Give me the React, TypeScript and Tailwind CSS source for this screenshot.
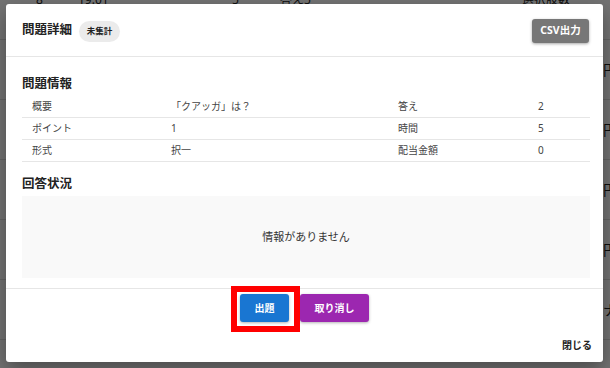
const font = { fontFamily: '"Noto Sans", "Noto Sans CJK JP", sans-serif' };

const info = [
  ["概要", "「クアッガ」は？", "答え", "2"],
  ["ポイント", "1", "時間", "5"],
  ["形式", "択一", "配当金額", "0"],
];

function BackgroundTable() {
  return (
    <div className="text-[12px] leading-[12px] text-[#222]">
      <div className="-mt-[6px] h-[46px] border-b border-[#ddd] grid grid-cols-[36px_42px_154px_48px_242px_81px_1fr]">
        <span />
        <span>8</span>
        <span>19:01</span>
        <span>5</span>
        <span>答え5</span>
        <span>選択肢数</span>
        <span />
      </div>
      {[0, 1, 2, 3, 4].map((i) => (
        <div key={i} className="h-[60px] border-b border-[#ddd] grid grid-cols-[603px_1fr] items-center">
          <span />
          <span className="text-[14px]">{i === 4 ? "ナ" : "円"}</span>
        </div>
      ))}
    </div>
  );
}

export default function App() {
  return (
    <div className="relative h-[368px] w-[610px] overflow-hidden bg-white" style={font}>
      <BackgroundTable />
      <div className="absolute inset-0 bg-black/[0.55]" />

      <div className="absolute left-[6px] top-[4px] w-[597px] h-[358px] bg-white rounded-[3px] shadow-[0_8px_20px_rgba(0,0,0,0.35)] flex flex-col">
        <header className="h-[53px] border-b border-[#e6e6e6] px-4 flex items-center justify-between">
          <div className="flex items-center gap-[7px]">
            <h2 className="text-[12.5px] font-bold text-[#222] leading-[14px]">問題詳細</h2>
            <span className="mt-[3px] h-[21px] w-[41px] rounded-full bg-[#ebebeb] text-[8.5px] font-bold text-[#222] flex items-center justify-center">
              未集計
            </span>
          </div>
          <button className="mt-[2px] mr-[-2px] h-[24px] w-[57px] rounded-[3px] bg-[#777] text-white text-[10.5px] font-bold shadow-[0_1px_3px_rgba(0,0,0,0.35)]">
            CSV出力
          </button>
        </header>

        <section className="px-4 pt-[20px] pb-[10px] border-b border-[#e6e6e6]">
          <h3 className="text-[12.5px] font-bold text-[#222] leading-[14px]">問題情報</h3>
          <div className="mt-[5px] mr-[-3px]">
            {info.map((r) => (
              <div
                key={r[0]}
                className="h-[22px] border-b border-[#e6e6e6] grid grid-cols-[139px_227px_140px_1fr] items-center text-[10px] text-[#444]"
              >
                {r.map((c, i) => (
                  <span key={i} className="pl-[10px]">
                    {c}
                  </span>
                ))}
              </div>
            ))}
          </div>

          <h3 className="mt-[15px] text-[12.5px] font-bold text-[#222] leading-[14px]">回答状況</h3>
          <div className="mt-[5px] mr-[-3px] h-[82px] bg-[#f9f9f9] flex items-center justify-center text-[11px] text-[#333]">
            情報がありません
          </div>
        </section>

        <div className="relative flex-1">
          <div className="pt-[5px] flex justify-center gap-[11px]">
            <button className="h-[28px] w-[49px] rounded-[3px] bg-[#1976d2] text-white text-[10px] font-bold shadow-[0_1px_3px_rgba(0,0,0,0.3)]">
              出題
            </button>
            <button className="h-[28px] w-[69px] rounded-[3px] bg-[#9c27b0] text-white text-[10px] font-bold shadow-[0_1px_3px_rgba(0,0,0,0.3)]">
              取り消し
            </button>
          </div>
          <div className="mt-[16px] pr-[11px] flex justify-end">
            <button className="text-[10px] font-bold text-[#222]">閉じる</button>
          </div>
          <div className="absolute left-[225px] top-[-3px] w-[69px] h-[46px] border-[6px] border-[#ff0000]" />
        </div>
      </div>
    </div>
  );
}
